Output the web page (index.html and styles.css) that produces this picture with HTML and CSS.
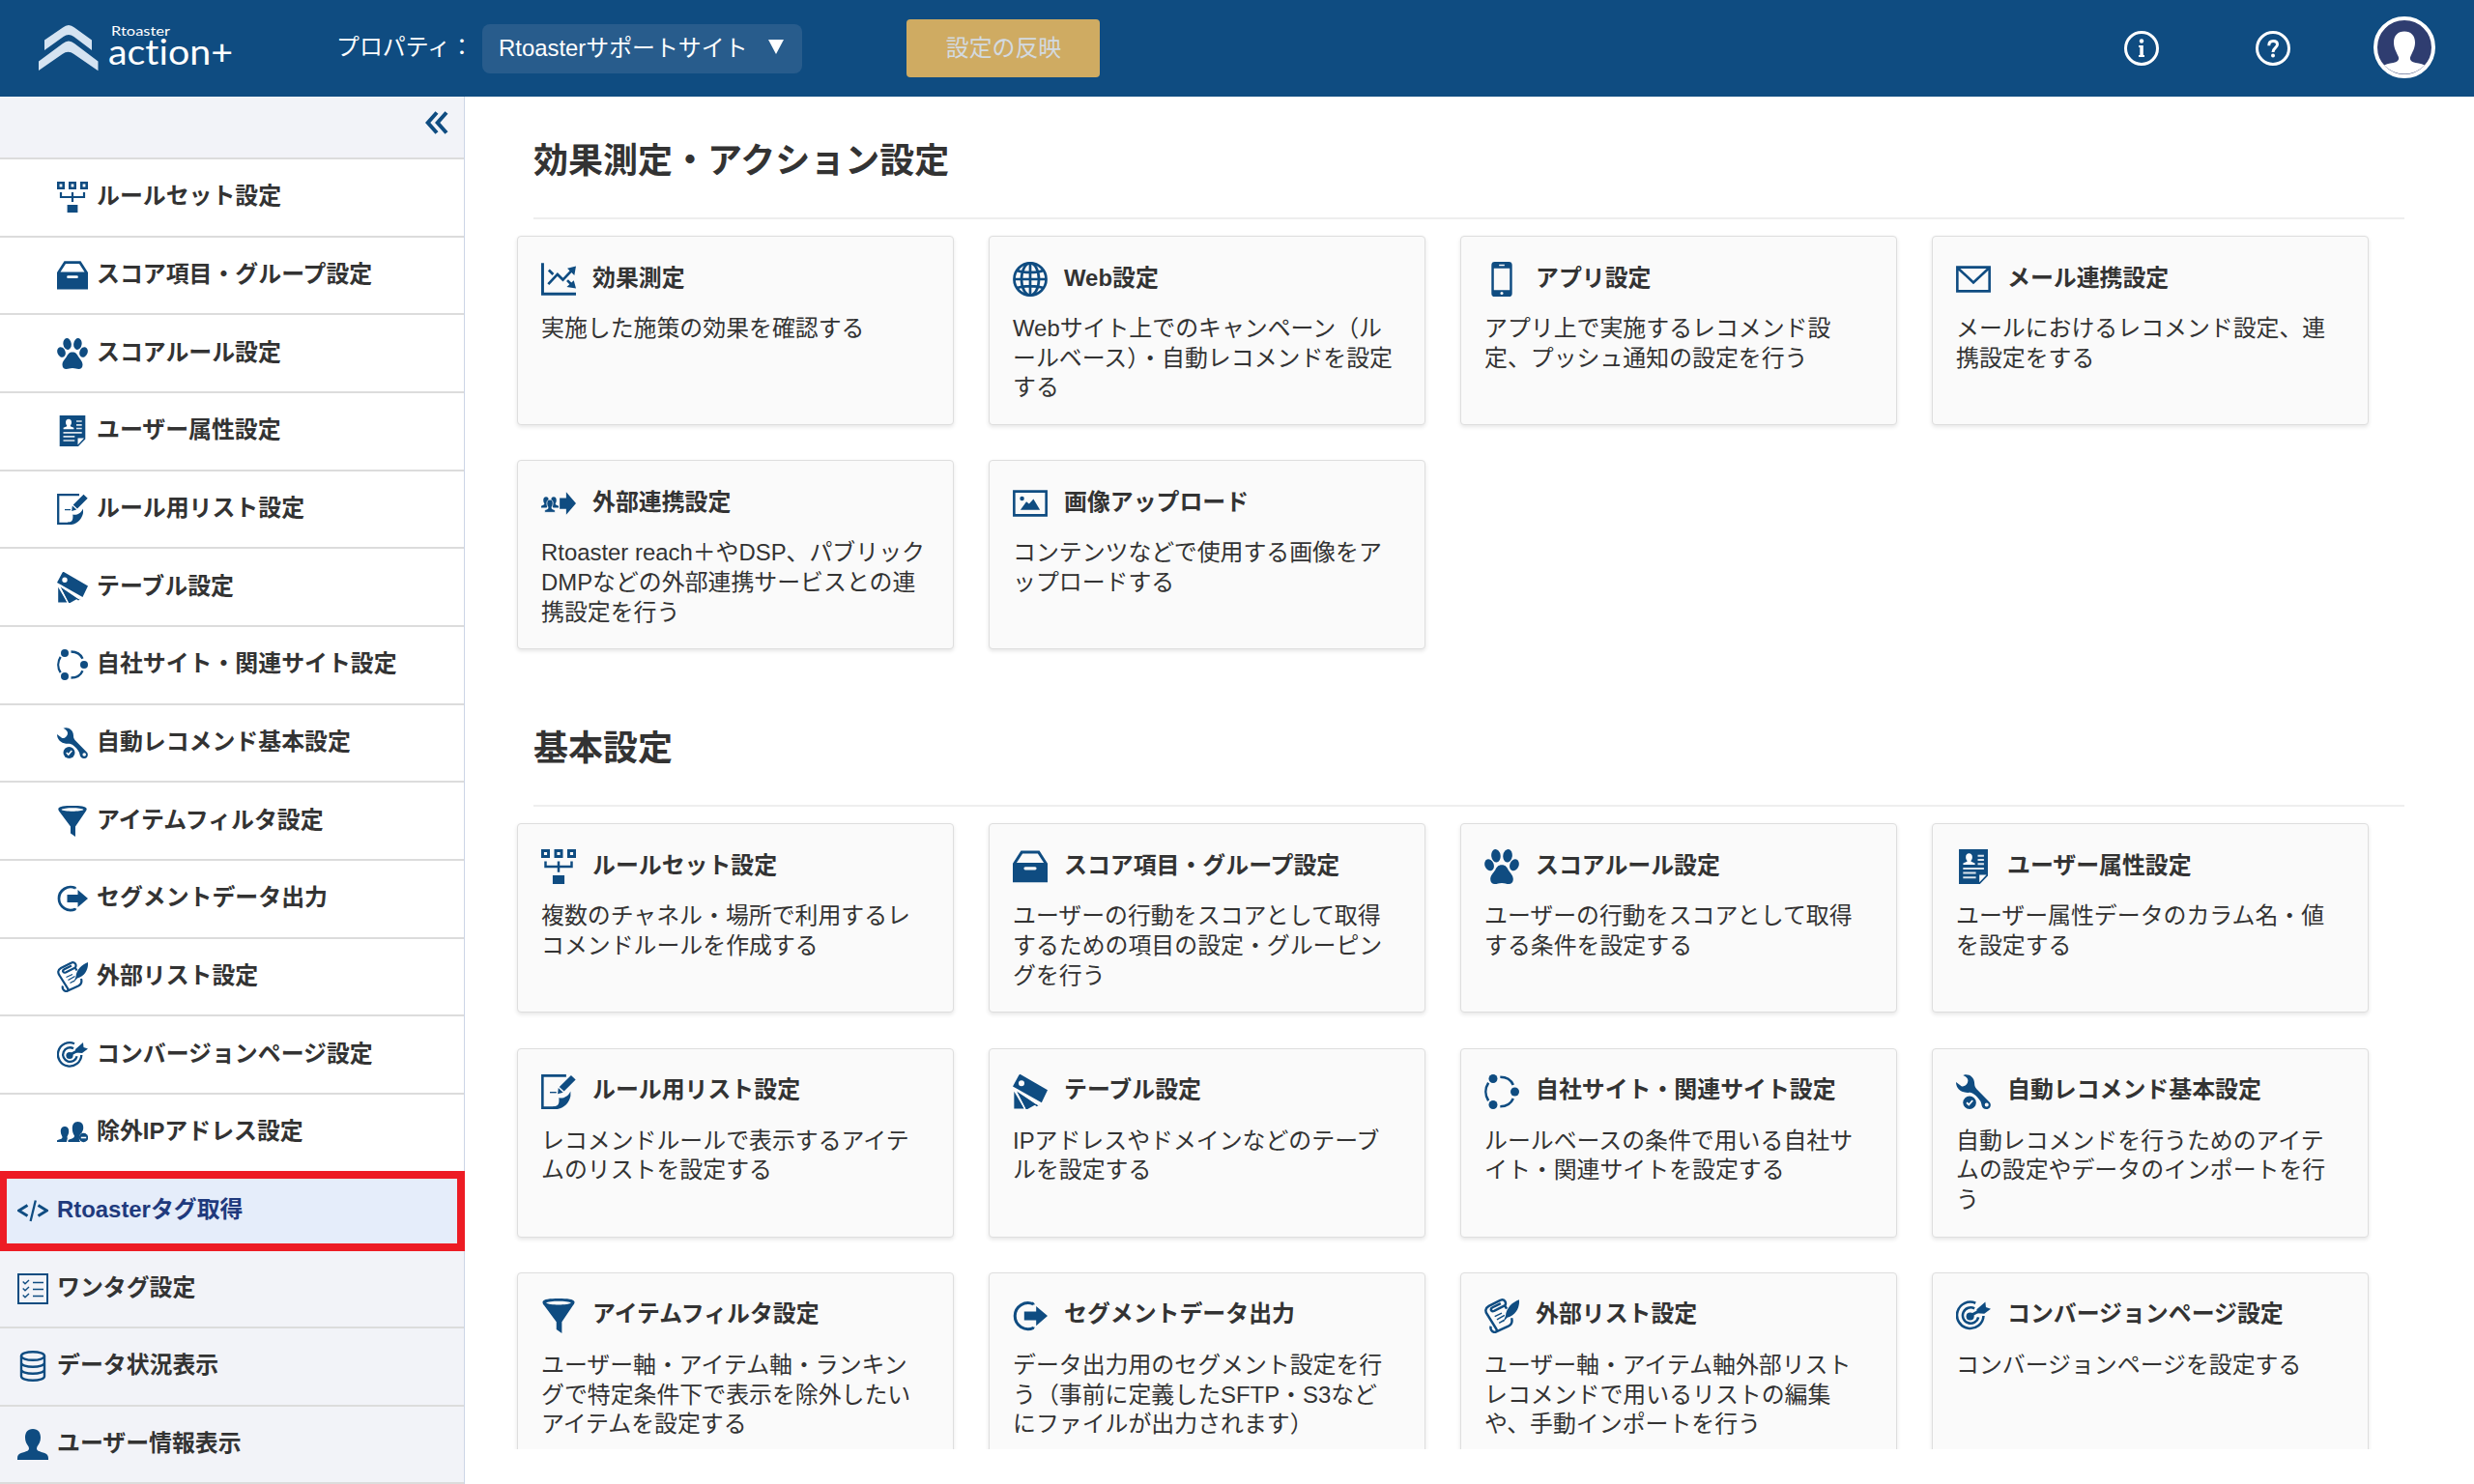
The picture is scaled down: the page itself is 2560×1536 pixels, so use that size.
FILE: index.html
```html
<!DOCTYPE html>
<html lang="ja">
<head>
    <meta charset="UTF-8">
    <title>Rtoaster action+</title>
    <link rel="stylesheet" href="styles.css">
</head>
<body>
    <!-- icon set -->
    <svg class="icon-defs" width="0" height="0">
        <symbol id="i-ruleset" viewBox="0 0 32 32">
            <path fill="none" stroke="currentColor" stroke-width="2.6" d="M1.3 1.3h5.4v5.4H1.3zM13.3 1.3h5.4v5.4h-5.4zM25.3 1.3h5.4v5.4h-5.4z"/>
            <path fill="none" stroke="currentColor" stroke-width="2.2" d="M4 11v5h24v-5M16 11v10"/>
            <path d="M10.6 24h10.8v8H10.6z"/>
        </symbol>
        <symbol id="i-box" viewBox="0 0 32 32">
            <path fill-rule="evenodd" d="M7.500 1.300h17L32 13v17.500H0V13zM9 4L3.500 12.500h25L23 4zM11.500 16.300a1.200 1.200 0 0 0 0 2.700h9a1.200 1.200 0 0 0 0-2.700z"/>
        </symbol>
        <symbol id="i-paw" viewBox="0 0 32 32">
            <ellipse cx="4.500" cy="14.500" rx="4.100" ry="5.500" transform="rotate(-22 4.500 14.500)"/>
            <ellipse cx="10.600" cy="6" rx="4.200" ry="6" transform="rotate(-8 10.600 6)"/>
            <ellipse cx="21.400" cy="6" rx="4.200" ry="6" transform="rotate(8 21.400 6)"/>
            <ellipse cx="27.500" cy="14.500" rx="4.100" ry="5.500" transform="rotate(22 27.500 14.500)"/>
            <path d="M16 14.500c3.500 0 4.500 2 6 4.500 1.700 2.700 4.500 5 4.500 8.500 0 3-1.800 4.500-4 4.500-2.500 0-3.500-1-6.500-1s-4 1-6.500 1c-2.200 0-4-1.500-4-4.500 0-3.500 2.800-5.800 4.500-8.500 1.500-2.500 2.500-4.500 6-4.500z"/>
        </symbol>
        <symbol id="i-profile" viewBox="0 0 32 32">
            <path fill-rule="evenodd" d="M2.700 0h26.600v24.500L22 32H2.700zM21.500 23.500v7L28 23.500z"/>
            <path fill="#fff" d="M12 3.800c2 0 3 1.500 3 3.500 0 1.500-.7 2.500-1.200 3.200v.8l3.600 1.500v1.400H6.600v-1.400l3.600-1.500v-.8C9.700 9.800 9 8.800 9 7.300c0-2 1-3.500 3-3.500z"/>
            <path fill="none" stroke="#fff" stroke-width="1.700" opacity=".85" d="M20 6h5.700M20 9.800h5.700M20 13.500h5.700M6.500 17.800h19.200M6.500 21.800h11.800M6.500 26h11.800"/>
        </symbol>
        <symbol id="i-edit" viewBox="0 0 32 32">
            <path fill="none" stroke="currentColor" stroke-width="2.300" d="M23 1.200H1.200v29.600H14"/>
            <path d="M27 15.500v4.500c-1 5.500-5.500 11-12 12h-4v-2.400c4 0 6-1.500 5.300-8 4.200.8 8.200-1 10.700-6.100z"/>
            <path d="M27.500.8l4.200 4L21 15.500l-4.300-4zM15.800 12.400l4.400 4.200-5 1.500z"/>
            <path fill="none" stroke="currentColor" stroke-width="1.200" d="M8 16.600h6"/>
        </symbol>
        <symbol id="i-tag" viewBox="0 0 32 32">
            <path fill-rule="evenodd" d="M7 0L32 14.500 26.500 26 0 11 5.500.8C6 0 6.500 0 7 0zM8 5.500a2.700 2.700 0 1 0 0 5.400 2.700 2.700 0 0 0 0-5.400z"/>
            <path d="M1.200 15.800L10.500 31.500H1.200zM3.500 15.500L21.500 27.500 13.500 32H12zM24.500 28l-2.500 1.500-4-3z"/>
            <path stroke="#fff" stroke-width="1.200" d="M2.300 14.500l9 17.500M3 13.500l21 15"/>
        </symbol>
        <symbol id="i-sites" viewBox="0 0 32 32">
            <circle cx="8" cy="4" r="4"/><circle cx="28" cy="16" r="4"/><circle cx="8" cy="28" r="4"/>
            <path fill="none" stroke="currentColor" stroke-width="2.300" d="M3.700 7.800a15 15 0 0 0 0 16.400M14.500 2.500c5.500 0 10 2.700 12 7.300M14.500 29.500c5.500 0 10-2.700 12-7.300"/>
        </symbol>
        <symbol id="i-wrench" viewBox="0 0 32 32">
            <path fill-rule="evenodd" d="M6.500.8C11-1 17 2 17 8.500c0 2.500.8 3.500 2 5L31 25.800c1 1.200 1.200 3 .2 4.600-1.300 1.800-4.300 2.200-6.200.6-2-1.800-1-4.500-3-7-2-2.800-5-6.500-9-7.300C6.500 17.500 0 14 0 7l5 3.800c2.500 1 6-1.500 6-5C11 3.500 9 2.200 6.500.8zM28.200 26.200a1.800 1.800 0 1 0 0 3.600 1.800 1.800 0 0 0 0-3.600z"/>
            <circle cx="12.500" cy="26" r="6"/>
            <path fill="none" stroke="#fff" stroke-width="1.600" d="M9.800 26l2 2 3.500-4"/>
        </symbol>
        <symbol id="i-filter" viewBox="0 0 32 32">
            <path fill-rule="evenodd" d="M1.300 3C2 .5 8 0 16 0s14 .5 14.700 3c0 1.500-.8 2.500-1.500 3.500L19 21.500V32l-5-3.500v-7L2.800 6.500C2 5.500 1.300 4.500 1.300 3zM4.500 4c2.500 2.300 20.500 2.300 23 0-2.500-2.200-20.500-2.200-23 0z"/>
        </symbol>
        <symbol id="i-export" viewBox="0 0 32 32">
            <path fill="none" stroke="currentColor" stroke-width="2.700" d="M19 5.200A12 12 0 1 0 19 27M17.500 4.500c.8.200 1.400.6 1.500 1.200M17.500 27.500c.8-.2 1.400-.6 1.500-1.200"/>
            <path d="M10.500 12h11V7L32 16 21.500 25v-5h-11z"/>
        </symbol>
        <symbol id="i-scroll" viewBox="0 0 32 32">
            <path fill="none" stroke="currentColor" stroke-width="2.200" d="M15 1.400L4 7C.5 9 .7 12 2.500 14.500L11 28c.8 1.800.3 3-1.500 3-2.500 0-4.500-3-3.500-5.500M15 1.400c3.500-1 5.500 2 4 5L9 11.500C6 12.500 5 9.500 7.500 8.200L15 4.500M10 31l12-5.500c3-1.500 4-4 3-7.500M19 7l1.500 2.500"/>
            <path fill="none" stroke="currentColor" stroke-width="1.300" d="M9.500 16.500l6.500-3M11.500 19.500l7-4M13.500 22.500l4.500-2.500"/>
            <path d="M32 1c.5 6-2 14-11 16.500L17 22l2.500-6C20 8.500 26 3 32 1z"/>
        </symbol>
        <symbol id="i-target" viewBox="0 0 32 32">
            <g fill="none" stroke="currentColor">
                <path stroke-width="2.300" d="M18 4.200a12.200 12.200 0 1 0 7.300 11.800"/>
                <path stroke-width="2.300" d="M17 9.200a7.300 7.300 0 1 0 3.600 8"/>
                <path stroke-width="2.600" d="M12 16.500L27 8.500"/>
            </g>
            <circle cx="13" cy="16.500" r="3.600"/>
            <path d="M19 10L27 3l.5 5 4.500 1.500-6 4.500-6.500-.5z"/>
        </symbol>
        <symbol id="i-exclude" viewBox="0 0 32 32">
            <path d="M8 10c3 0 4.300 2.200 4.200 5.200 0 2.500-1.200 3.800-1.700 5.300l.3 2-1 3.500H0v-1.700c2.500-1.300 5.500-1 5.500-3.300 0-1.500-1.700-3-1.700-5.800C3.800 12.200 5 10 8 10zM21.500 5c4.300 0 6 3 5.700 7 0 2-1.200 3.200-1.700 4.700-2.500 1.300-3.500 6.300-1.500 9.300H11.500v-2c3.200-1.500 6.500-1.500 6.500-4.500-1.300-2-2.200-4-2.200-7.500 0-4 1.700-7 5.700-7z"/>
            <circle cx="27.500" cy="21.500" r="4.700"/>
            <path stroke="#fff" stroke-width="1.600" d="M24.800 21.500h5.400"/>
        </symbol>
        <symbol id="i-code" viewBox="0 0 32 32">
            <path fill="none" stroke="currentColor" stroke-width="3" d="M10.500 10.500L1.500 16l9 5.500M21.500 10.500l9 5.500-9 5.500"/>
            <path fill="none" stroke="currentColor" stroke-width="2.300" d="M18.800 5.500l-5.200 21.500"/>
        </symbol>
        <symbol id="i-check" viewBox="0 0 32 32">
            <path fill="none" stroke="currentColor" stroke-width="2" d="M1 1h30v30H1z"/>
            <path fill="none" stroke="currentColor" stroke-width="1.400" d="M5.700 8.500l2.300 2.200 4-3.700M5.700 15.500L8 17.700l4-3.700M5.700 22.500L8 24.700l4-3.700M16 9.500h11M16 16.500h11M16 23.500h11"/>
        </symbol>
        <symbol id="i-database" viewBox="0 0 32 32">
            <g fill="none" stroke="currentColor" stroke-width="2.400">
                <ellipse cx="16" cy="5.500" rx="12" ry="4.300"/>
                <path d="M4 5.500v21c0 2.500 5.500 4.300 12 4.300s12-1.800 12-4.300v-21M4 12.500c0 2.500 5.500 4.300 12 4.300s12-1.800 12-4.300M4 19.500c0 2.500 5.500 4.300 12 4.300s12-1.800 12-4.300"/>
            </g>
        </symbol>
        <symbol id="i-user" viewBox="0 0 32 32">
            <path d="M16 0c5.500 0 8 3.800 8 9 0 4-1.700 6.700-3.500 9.300-.8 2-.8 3.500 1 4.400C25.500 24.500 32 24.500 32 30v2H0v-2c0-5.500 6.500-5.500 10.500-7.300 1.800-.9 1.800-2.400 1-4.400C9.700 15.700 8 13 8 9c0-5.200 2.500-9 8-9z"/>
        </symbol>
        <symbol id="i-chart" viewBox="0 0 32 32">
            <path fill="none" stroke="currentColor" stroke-width="2.600" d="M1.300 1v28.500H32"/>
            <path fill="none" stroke="currentColor" stroke-width="2.400" d="M6.500 20.500l8.500-9 5 5L29 7M7 7.500l4 4M24 17l5 5"/>
            <path d="M32 4l-1.500 8.500-6.500-6.500zM32 24.500l-8.500-1.500 6.500-6z"/>
        </symbol>
        <symbol id="i-globe" viewBox="0 0 32 32">
            <g fill="none" stroke="currentColor" stroke-width="2.400">
                <circle cx="16" cy="16" r="14.700"/><ellipse cx="16" cy="16" rx="8" ry="14.700"/>
                <path d="M16 1v30M1 16h30M4 8c6 2.300 18 2.300 24 0M4 24c6-2.300 18-2.300 24 0"/>
            </g>
        </symbol>
        <symbol id="i-phone" viewBox="0 0 32 32">
            <path fill-rule="evenodd" d="M9.500 0h13q3 0 3 3v26q0 3-3 3h-13q-3 0-3-3V3q0-3 3-3zM8.700 6v20h14.600V6zM13.500 2.500v1.300h5V2.500zM16 27.500a1.400 1.400 0 1 0 0 2.800 1.400 1.400 0 0 0 0-2.800z"/>
        </symbol>
        <symbol id="i-mail" viewBox="0 0 32 32">
            <path fill="none" stroke="currentColor" stroke-width="2.300" d="M1.200 5h29.600v22H1.200zM1.500 5.500L16 19 30.500 5.500"/>
        </symbol>
        <symbol id="i-link" viewBox="0 0 32 32">
            <path d="M17 11h6V5.500L32 16 23 26.500V21h-6zM4.500 10c1.700 0 2.500 1.300 2.300 3 0 1.300-.6 2-.9 2.700v2L5 20H0v-1.500c1-1 3-.8 3-2.300-.6-1-1-1.800-1-3.200 0-1.700.8-3 2.500-3zM11.500 10c-1.700 0-2.500 1.300-2.300 3 0 1.300.6 2 .9 2.700v2l.9 2.300h5v-1.500c-1-1-3-.8-3-2.300.6-1 1-1.800 1-3.200 0-1.700-.8-3-2.500-3z"/>
            <path stroke="#fafafa" stroke-width=".7" d="M8 12.500c2.300 0 3 1.800 2.800 4 0 1.300-.7 2.200-1 3v1.300c1 .9 3 .5 3 2.200v1.300H3.200V23c0-1.700 2-1.300 3-2.200v-1.300c-.3-.8-1-1.700-1-3 0-2.200.5-4 2.800-4z"/>
        </symbol>
        <symbol id="i-image" viewBox="0 0 32 32">
            <path fill="none" stroke="currentColor" stroke-width="2.300" d="M1.200 5h29.600v22H1.200z"/>
            <circle cx="8.500" cy="11.500" r="2"/>
            <path d="M7 22l5.500-7.500 2.500 2 4-4.500 6 10z"/>
        </symbol>
    </svg>

    <header class="header">
        <svg class="logo" viewBox="0 0 210 66" width="210" height="66">
            <path fill="#d5e3f1" d="M6 24.500L25 11.500q6-5 12 0l18 13V35L36.500 21q-5.500-4-11 0L6 35z"/>
            <path fill="#d5e3f1" d="M0 46.500L25 28q6-5 12 0l24.500 18.500v9.700L36.500 39q-6-4.500-12 0L0 56z"/>
            <text x="75" y="20" font-size="14" textLength="61" lengthAdjust="spacingAndGlyphs">Rtoaster</text>
            <text x="72" y="49.500" font-size="36" textLength="129" lengthAdjust="spacingAndGlyphs">action+</text>
        </svg>
        <span class="property-label">プロパティ：</span>
        <div class="property-select">Rtoasterサポートサイト<span class="caret"></span></div>
        <button class="apply-btn">設定の反映</button>
        <nav class="header-icons">
            <svg width="36" height="36" viewBox="0 0 36 36">
                <circle cx="18" cy="18" r="16.500" fill="none" stroke="#fff" stroke-width="3"/>
                <circle cx="18" cy="10.500" r="2.200" fill="#fff"/>
                <path fill="#fff" d="M15 15h4.800v10H21v2h-6v-2h1.300v-8H15z"/>
            </svg>
            <svg width="36" height="36" viewBox="0 0 36 36">
                <circle cx="18" cy="18" r="16.500" fill="none" stroke="#fff" stroke-width="3"/>
                <path fill="none" stroke="#fff" stroke-width="3" d="M13.800 15.200c0-3 1.700-4.700 4.400-4.700 2.600 0 4.300 1.300 4.300 3.600 0 3.300-4.500 3.200-4.500 7.900"/>
                <circle cx="18" cy="25.500" r="2" fill="#fff"/>
            </svg>
            <svg class="avatar" width="64" height="64" viewBox="0 0 64 64">
                <circle cx="32" cy="32" r="30" fill="#2f3d70" stroke="#fff" stroke-width="4"/>
                <path fill="#fff" d="M32 15.500c7 0 11 4.500 11 11.500 0 6-3 10.500-4.500 14-1.200 3-.7 4.700 2.500 6.300 3 1.300 8 1.200 12 3.200A29 29 0 0 1 11 50.500c4-2 9-1.900 12-3.200 3.200-1.600 3.700-3.300 2.500-6.300C24 37.500 21 33 21 27c0-7 4-11.500 11-11.500z"/>
            </svg>
        </nav>
    </header>

    <div class="layout">
        <aside class="sidebar">
            <div class="collapse">
                <svg width="24" height="24" viewBox="0 0 24 24"><path fill="none" stroke="currentColor" stroke-width="4" d="M12 1.500L2.700 12 12 22.500M22 1.500L12.700 12 22 22.500"/></svg>
            </div>
            <ul class="menu">
                <li class="sub"><svg><use href="#i-ruleset"/></svg>ルールセット設定</li>
                <li class="sub"><svg><use href="#i-box"/></svg>スコア項目・グループ設定</li>
                <li class="sub"><svg><use href="#i-paw"/></svg>スコアルール設定</li>
                <li class="sub"><svg><use href="#i-profile"/></svg>ユーザー属性設定</li>
                <li class="sub"><svg><use href="#i-edit"/></svg>ルール用リスト設定</li>
                <li class="sub"><svg><use href="#i-tag"/></svg>テーブル設定</li>
                <li class="sub"><svg><use href="#i-sites"/></svg>自社サイト・関連サイト設定</li>
                <li class="sub"><svg><use href="#i-wrench"/></svg>自動レコメンド基本設定</li>
                <li class="sub"><svg><use href="#i-filter"/></svg>アイテムフィルタ設定</li>
                <li class="sub"><svg><use href="#i-export"/></svg>セグメントデータ出力</li>
                <li class="sub"><svg><use href="#i-scroll"/></svg>外部リスト設定</li>
                <li class="sub"><svg><use href="#i-target"/></svg>コンバージョンページ設定</li>
                <li class="sub"><svg><use href="#i-exclude"/></svg>除外IPアドレス設定</li>
                <li class="active"><svg><use href="#i-code"/></svg>Rtoasterタグ取得</li>
                <li><svg><use href="#i-check"/></svg>ワンタグ設定</li>
                <li><svg><use href="#i-database"/></svg>データ状況表示</li>
                <li><svg><use href="#i-user"/></svg>ユーザー情報表示</li>
            </ul>
        </aside>

        <main class="main">
            <section>
                <h2>効果測定・アクション設定</h2>
                <div class="cards">
                    <div class="card">
                        <h3><svg><use href="#i-chart"/></svg>効果測定</h3>
                        <p>実施した施策の効果を確認する</p>
                    </div>
                    <div class="card">
                        <h3><svg><use href="#i-globe"/></svg>Web設定</h3>
                        <p>Webサイト上でのキャンペーン（ル<br>ールベース）・自動レコメンドを設定<br>する</p>
                    </div>
                    <div class="card">
                        <h3><svg><use href="#i-phone"/></svg>アプリ設定</h3>
                        <p>アプリ上で実施するレコメンド設<br>定、プッシュ通知の設定を行う</p>
                    </div>
                    <div class="card">
                        <h3><svg><use href="#i-mail"/></svg>メール連携設定</h3>
                        <p>メールにおけるレコメンド設定、連<br>携設定をする</p>
                    </div>
                    <div class="card">
                        <h3><svg><use href="#i-link"/></svg>外部連携設定</h3>
                        <p>Rtoaster reach＋やDSP、パブリック<br>DMPなどの外部連携サービスとの連<br>携設定を行う</p>
                    </div>
                    <div class="card">
                        <h3><svg><use href="#i-image"/></svg>画像アップロード</h3>
                        <p>コンテンツなどで使用する画像をア<br>ップロードする</p>
                    </div>
                </div>
            </section>

            <section>
                <h2>基本設定</h2>
                <div class="cards">
                    <div class="card">
                        <h3><svg><use href="#i-ruleset"/></svg>ルールセット設定</h3>
                        <p>複数のチャネル・場所で利用するレ<br>コメンドルールを作成する</p>
                    </div>
                    <div class="card">
                        <h3><svg><use href="#i-box"/></svg>スコア項目・グループ設定</h3>
                        <p>ユーザーの行動をスコアとして取得<br>するための項目の設定・グルーピン<br>グを行う</p>
                    </div>
                    <div class="card">
                        <h3><svg><use href="#i-paw"/></svg>スコアルール設定</h3>
                        <p>ユーザーの行動をスコアとして取得<br>する条件を設定する</p>
                    </div>
                    <div class="card">
                        <h3><svg><use href="#i-profile"/></svg>ユーザー属性設定</h3>
                        <p>ユーザー属性データのカラム名・値<br>を設定する</p>
                    </div>
                    <div class="card">
                        <h3><svg><use href="#i-edit"/></svg>ルール用リスト設定</h3>
                        <p>レコメンドルールで表示するアイテ<br>ムのリストを設定する</p>
                    </div>
                    <div class="card">
                        <h3><svg><use href="#i-tag"/></svg>テーブル設定</h3>
                        <p>IPアドレスやドメインなどのテーブ<br>ルを設定する</p>
                    </div>
                    <div class="card">
                        <h3><svg><use href="#i-sites"/></svg>自社サイト・関連サイト設定</h3>
                        <p>ルールベースの条件で用いる自社サ<br>イト・関連サイトを設定する</p>
                    </div>
                    <div class="card">
                        <h3><svg><use href="#i-wrench"/></svg>自動レコメンド基本設定</h3>
                        <p>自動レコメンドを行うためのアイテ<br>ムの設定やデータのインポートを行<br>う</p>
                    </div>
                    <div class="card">
                        <h3><svg><use href="#i-filter"/></svg>アイテムフィルタ設定</h3>
                        <p>ユーザー軸・アイテム軸・ランキン<br>グで特定条件下で表示を除外したい<br>アイテムを設定する</p>
                    </div>
                    <div class="card">
                        <h3><svg><use href="#i-export"/></svg>セグメントデータ出力</h3>
                        <p>データ出力用のセグメント設定を行<br>う（事前に定義したSFTP・S3など<br>にファイルが出力されます）</p>
                    </div>
                    <div class="card">
                        <h3><svg><use href="#i-scroll"/></svg>外部リスト設定</h3>
                        <p>ユーザー軸・アイテム軸外部リスト<br>レコメンドで用いるリストの編集<br>や、手動インポートを行う</p>
                    </div>
                    <div class="card">
                        <h3><svg><use href="#i-target"/></svg>コンバージョンページ設定</h3>
                        <p>コンバージョンページを設定する</p>
                    </div>
                </div>
            </section>
        </main>
    </div>
</body>
</html>
```
FILE: styles.css
```css
* {
    box-sizing: border-box;
}
body {
    margin: 0;
    height: 1536px;
    background: #fff;
    color: #333;
    font-family: "Liberation Sans", "Noto Sans CJK JP", sans-serif;
    font-size: 23.9px;
    overflow: hidden;
}
svg {
    display: block;
    flex-shrink: 0;
    fill: currentColor;
}
.icon-defs {
    position: absolute;
}

/* header */
.header {
    display: flex;
    align-items: center;
    height: 100px;
    padding: 0 40px;
    background: #0f4c81;
    color: #fff;
}
.logo {
    font-family: Lato, sans-serif;
    font-variant-ligatures: none;
}
.property-label {
    width: 150px;
    margin-left: 98px;
    white-space: nowrap;
    line-height: 36px;
    padding-bottom: 2px;
}
.property-select {
    display: flex;
    align-items: center;
    justify-content: space-between;
    width: 331px;
    height: 51px;
    margin-left: 1px;
    padding: 0 19px 5px 17px;
    border-radius: 8px;
    background: #285c8c;
    white-space: nowrap;
}
.caret {
    margin-top: 2px;
    border: 8px solid transparent;
    border-top: 15px solid #fff;
    border-bottom: 0;
}
.apply-btn {
    width: 200px;
    height: 60px;
    margin-left: 108px;
    padding: 0 0 5px 1px;
    border: 0;
    border-radius: 4px;
    background: #cfab62;
    color: #d3dae0;
    font: inherit;
}
.header-icons {
    display: flex;
    align-items: center;
    gap: 100px;
    margin-left: auto;
}
.avatar {
    margin: 0 0 2px -14px;
}

.layout {
    display: flex;
    height: 1436px;
}

/* sidebar */
.sidebar {
    width: 481px;
    flex-shrink: 0;
    background: #f2f3f8;
    border-right: 1px solid #ccd5e6;
}
.collapse {
    display: flex;
    justify-content: flex-end;
    height: 65px;
    padding: 15px 16px 0 0;
    border-bottom: 2px solid #dcdcdc;
    color: #0f4c81;
}
.menu {
    margin: 0;
    padding: 0;
    list-style: none;
    font-weight: bold;
}
.menu li {
    display: flex;
    align-items: center;
    gap: 9px;
    height: 80.67px;
    padding-left: 18px;
    padding-bottom: 2px;
    border-bottom: 2px solid #dcdcdc;
    line-height: 36px;
}
.menu li.sub {
    padding-left: 59px;
    background: #fff;
}
.menu svg {
    width: 32px;
    height: 32px;
    margin-top: 2px;
    color: #0f4c81;
}
.menu li.active {
    position: relative;
    background: #e5edfa;
    color: #1f3a7d;
}
/* red frame over the row borders */
.menu li.active::after {
    content: "";
    position: absolute;
    inset: -2px -1px -3px 0;
    border: 8px solid #ed1c24;
    border-left-width: 7px;
}

/* main */
.main {
    flex: 1;
    height: 1400px;
    padding: 37px 72px 0 54px;
    overflow: hidden;
}
h2 {
    height: 90px;
    margin: 0 0 17px 17px;
    padding-top: 4px;
    border-bottom: 2px solid #eee;
    font-size: 36px;
    line-height: 52px;
}
.cards {
    display: grid;
    grid-template-columns: repeat(4, 452px);
    grid-auto-rows: 196px;
    gap: 36.3px 36px;
    margin-bottom: 73px;
}
.card {
    padding: 25px 0 0 24px;
    border: 1px solid #dedede;
    border-radius: 4px;
    background: #fafafa;
    box-shadow: 0 2px 4px rgba(0, 0, 0, 0.1);
    white-space: nowrap;
}
.card h3 {
    display: flex;
    align-items: center;
    gap: 17px;
    height: 36px;
    margin: 0 0 19px;
    padding-bottom: 1px;
    font-size: 23.9px;
    line-height: 36px;
}
.card svg {
    width: 36px;
    height: 36px;
    margin-top: 3px;
    color: #0f4c81;
}
.card p {
    margin: 0;
    line-height: 30.7px;
}
```
